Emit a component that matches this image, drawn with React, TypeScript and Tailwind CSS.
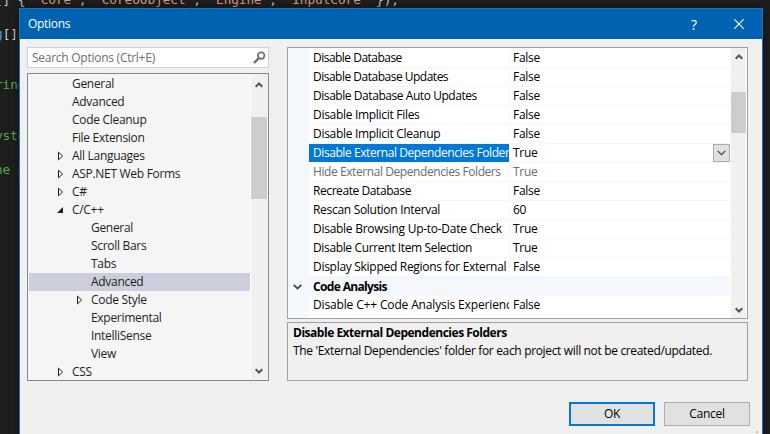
import React from "react";

type Node = { label: string; level: 0 | 1; state?: "open" | "closed"; selected?: boolean };

const tree: Node[] = [
  { label: "General", level: 0 },
  { label: "Advanced", level: 0 },
  { label: "Code Cleanup", level: 0 },
  { label: "File Extension", level: 0 },
  { label: "All Languages", level: 0, state: "closed" },
  { label: "ASP.NET Web Forms", level: 0, state: "closed" },
  { label: "C#", level: 0, state: "closed" },
  { label: "C/C++", level: 0, state: "open" },
  { label: "General", level: 1 },
  { label: "Scroll Bars", level: 1 },
  { label: "Tabs", level: 1 },
  { label: "Advanced", level: 1, selected: true },
  { label: "Code Style", level: 1, state: "closed" },
  { label: "Experimental", level: 1 },
  { label: "IntelliSense", level: 1 },
  { label: "View", level: 1 },
  { label: "CSS", level: 0, state: "closed" },
];

type Prop = { name: string; value: string; kind?: "selected" | "disabled"; track?: string };

const props: Prop[] = [
  { name: "Disable Database", value: "False", track: "tracking-[-0.52px]" },
  { name: "Disable Database Updates", value: "False", track: "tracking-[-0.5px]" },
  { name: "Disable Database Auto Updates", value: "False", track: "tracking-[-0.44px]" },
  { name: "Disable Implicit Files", value: "False" },
  { name: "Disable Implicit Cleanup", value: "False" },
  {
    name: "Disable External Dependencies Folders",
    value: "True",
    kind: "selected",
    track: "tracking-[-0.42px]",
  },
  {
    name: "Hide External Dependencies Folders",
    value: "True",
    kind: "disabled",
    track: "tracking-[-0.42px]",
  },
  { name: "Recreate Database", value: "False", track: "tracking-[-0.42px]" },
  { name: "Rescan Solution Interval", value: "60" },
  { name: "Disable Browsing Up-to-Date Check", value: "True", track: "tracking-[-0.27px]" },
  { name: "Disable Current Item Selection", value: "True", track: "tracking-[-0.36px]" },
  { name: "Display Skipped Regions for External Includes", value: "False", track: "tracking-[-0.29px]" },
];

function Chevron({ up = false }: { up?: boolean }) {
  return (
    <svg width="8" height="6" viewBox="0 0 8 6" className={up ? "rotate-180" : ""}>
      <path d="M0.7 1.2 L4 4.5 L7.3 1.2" fill="none" stroke="#555555" strokeWidth="2" />
    </svg>
  );
}

function Expander({ state }: { state?: "open" | "closed" }) {
  return (
    <span className="flex h-[18px] w-[14px] shrink-0 items-center">
      {state === "closed" && (
        <svg width="6" height="10" viewBox="0 0 6 10">
          <path d="M0.5 1.2 V8.8 L4.6 5 Z" fill="#fff" stroke="#1e1e1e" strokeWidth="1" />
        </svg>
      )}
      {state === "open" && (
        <svg width="6" height="6" viewBox="0 0 6 6" className="-ml-px">
          <path d="M6 0 V6 H0 Z" fill="#1e1e1e" />
        </svg>
      )}
    </span>
  );
}

function PropertyRow({ p }: { p: Prop }) {
  const tone =
    p.kind === "selected" ? "bg-[#0078d7] text-white" : p.kind === "disabled" ? "text-[#6d6d6d]" : "text-black";
  return (
    <div className="flex h-[19px] shrink-0 pl-[21px]">
      <div
        className={`h-[18px] w-[200px] overflow-hidden whitespace-nowrap pl-1 leading-[18px] ${tone} ${p.track ?? ""}`}
      >
        {p.name}
      </div>
      <div
        className={`flex h-[19px] flex-1 justify-between border-b border-l border-[#f4f7fc] pl-[3px] leading-[18px] ${
          p.kind === "disabled" ? "text-[#6d6d6d]" : "text-black"
        }`}
      >
        <span>{p.value}</span>
        {p.kind === "selected" && (
          <span className="flex h-[18px] w-[17px] items-center justify-center border border-[#adadad] bg-[#e1e1e1]">
            <svg width="9" height="6" viewBox="0 0 9 6">
              <path d="M0.7 0.8 L4.5 4.6 L8.3 0.8" fill="none" stroke="#444" strokeWidth="1.2" />
            </svg>
          </span>
        )}
      </div>
    </div>
  );
}

export default function App() {
  return (
    <div className="relative h-[434px] w-[770px] overflow-hidden bg-[#1e1e1e] font-['Open_Sans',sans-serif] text-[12px] tracking-[-0.3px]">
      {/* Editor behind the dialog */}
      <pre className="-mt-[9px] -ml-[5px] font-['DejaVu_Sans_Mono',monospace] text-[12.66px] leading-[17px] tracking-normal text-[#c8c8c8]">
        {"[] { "}
        <span className="text-[#d69d85]">"Core"</span>, <span className="text-[#d69d85]">"CoreUObject"</span>,{" "}
        <span className="text-[#d69d85]">"Engine"</span>, <span className="text-[#d69d85]">"InputCore"</span>
        {" });\n\n"}
        <span className="text-[#569cd6]">g</span>
        {"[]\n\n\n"}
        <span className="text-[#57a64a]">{"ring\n\n\nystem\n\nne p"}</span>
      </pre>

      <div className="absolute top-2 left-[19px] flex h-[440px] w-[744px] flex-col border border-[#1873bb] bg-[#f0f0f0] shadow-[0_0_8px_rgba(0,0,0,0.5)]">
        <header className="flex h-[30px] shrink-0 items-center bg-[#0063b1] pl-2 text-white">
          <span className="flex-1">Options</span>
          <span className="w-[43px] text-[14px]">?</span>
          <svg width="10" height="10" viewBox="0 0 10 10" className="mr-[18px]">
            <path d="M0.3 0.3 L9.7 9.7 M9.7 0.3 L0.3 9.7" stroke="#fff" strokeWidth="1.1" />
          </svg>
        </header>

        <div className="flex gap-[18px] pt-2 pl-[7px]">
          <div className="flex w-[242px] flex-col gap-[5px]">
            <div className="flex h-[21px] items-center justify-between border border-[#ccceDB] bg-white pr-[2px] pl-1 text-[#6d6d6d]">
              <span className="tracking-[-0.26px]">Search Options (Ctrl+E)</span>
              <svg width="13" height="13" viewBox="0 0 13 13">
                <circle cx="8.2" cy="4.6" r="3.3" fill="none" stroke="#717171" strokeWidth="1.8" />
                <path d="M5.8 7.2 L1 12" stroke="#717171" strokeWidth="2.4" />
              </svg>
            </div>
            <div className="flex h-[308px] border border-[#828790] bg-[#f5f5f5] text-[#1e1e1e]">
              <div className="flex-1 pt-px pl-px">
                {tree.map((n, i) => (
                  <div
                    key={i}
                    className={`flex h-[18px] leading-[18px] ${n.level ? "pl-[48px]" : "pl-[29px]"} ${
                      n.selected ? "bg-[#cccedb]" : ""
                    }`}
                  >
                    <Expander state={n.state} />
                    <span>{n.label}</span>
                  </div>
                ))}
              </div>
              <div className="mt-px mr-px mb-px flex w-[17px] flex-col items-center border-l border-white bg-[#f0f0f0]">
                <div className="flex h-[42px] pt-[7px]">
                  <Chevron up />
                </div>
                <div className="h-[82px] w-full bg-[#cdcdcd]" />
                <div className="mt-auto pb-[5px]">
                  <Chevron />
                </div>
              </div>
            </div>
          </div>

          <div className="flex w-[461px] flex-col gap-[3px]">
            <div className="flex h-[272px] border border-[#a0a0a0] bg-white">
              <div className="flex h-[270px] w-[442px] flex-col overflow-hidden bg-[linear-gradient(to_right,#f4f7fc_21px,white_21px)] pt-px">
                {props.map((p) => (
                  <div key={p.name} className="shadow-[inset_0_-1px_0_#f4f7fc]">
                    <PropertyRow p={p} />
                  </div>
                ))}
                <div className="flex h-[19px] shrink-0 items-center bg-[#f4f7fc] pl-[5px] font-bold text-black">
                  <svg width="9" height="6" viewBox="0 0 9 6" className="mr-[11px]">
                    <path d="M0.7 0.8 L4.5 4.6 L8.3 0.8" fill="none" stroke="#444" strokeWidth="1.7" />
                  </svg>
                  <span className="tracking-[-0.65px]">Code Analysis</span>
                </div>
                <div className="shadow-[inset_0_-1px_0_#f4f7fc]">
                  <PropertyRow
                    p={{
                      name: "Disable C++ Code Analysis Experience",
                      value: "False",
                      track: "tracking-[-0.15px]",
                    }}
                  />
                </div>
              </div>
              <div className="ml-px flex w-[15px] flex-col items-center bg-[#f0f0f0]">
                <div className="flex h-[44px] pt-[6px]">
                  <Chevron up />
                </div>
                <div className="h-[41px] w-full bg-[#cdcdcd]" />
                <div className="mt-auto pb-[5px]">
                  <Chevron />
                </div>
              </div>
            </div>
            <div className="h-[59px] border border-[#a0a0a0] pt-px pl-[5px] leading-[18px] text-black">
              <div className="font-bold tracking-[-0.48px]">Disable External Dependencies Folders</div>
              <div className="tracking-[-0.34px]">
                The 'External Dependencies' folder for each project will not be created/updated.
              </div>
            </div>
          </div>
        </div>

        <div className="mt-[21px] flex justify-end gap-[9px] pr-[12px] text-black">
          <button className="h-6 w-[86px] border-2 border-[#0078d7] bg-[#e1e1e1]">OK</button>
          <button className="h-6 w-[86px] border border-[#adadad] bg-[#e1e1e1]">Cancel</button>
        </div>
        <div className="mt-[5px] mr-1 size-[2px] self-end bg-[#bfbfbf]" />
      </div>
    </div>
  );
}
